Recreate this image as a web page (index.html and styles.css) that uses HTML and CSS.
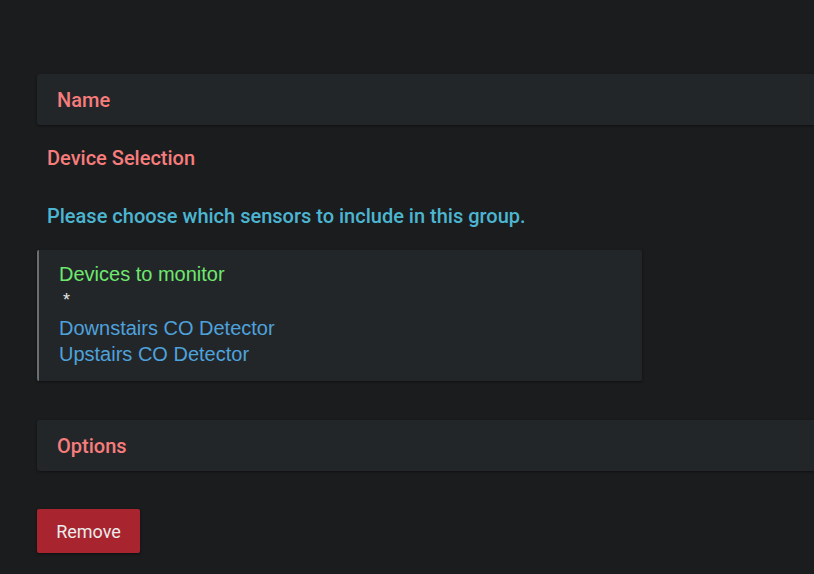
FILE: index.html
```html
<!DOCTYPE html>
<html>
<head>
<meta charset="utf-8">
<link rel="stylesheet" href="styles.css">
</head>
<body>
<div class="page">
  <div class="bar"><span class="bar-title">Name</span></div>
  <div class="section-title">Device Selection</div>
  <div class="desc">Please choose which sensors to include in this group.</div>
  <div class="devbox">
    <div class="dev-label">Devices to monitor</div>
    <div class="asterisk">*</div>
    <div class="dev-item">Downstairs CO Detector</div>
    <div class="dev-item">Upstairs CO Detector</div>
  </div>
  <div class="bar bar-options"><span class="bar-title">Options</span></div>
  <button class="remove">Remove</button>
</div>
</body>
</html>
```
FILE: styles.css
```css
html, body {
  margin: 0;
  padding: 0;
  background: #1b1c1e;
  height: 100%;
}
body {
  font-family: Roboto, "Liberation Sans", sans-serif;
  overflow: hidden;
}
.page {
  padding: 74px 0 0 37px;
  display: flex;
  flex-direction: column;
  align-items: flex-start;
}
.bar {
  align-self: stretch;
  height: 51px;
  background: #232629;
  border-radius: 3px 0 0 3px;
  box-shadow: 0 1px 3px rgba(0,0,0,0.45);
  display: flex;
  align-items: center;
  padding-left: 20px;
}
.bar-title {
  color: #f77c7c;
  font-size: 20px;
  font-weight: 500;
}
.section-title {
  color: #f77c7c;
  font-size: 20px;
  font-weight: 500;
  margin: 22px 0 0 10px;
  line-height: 22px;
}
.desc {
  color: #4cb6d2;
  font-size: 20px;
  font-weight: 500;
  margin: 36px 0 0 10px;
  line-height: 22px;
}
.devbox {
  margin-top: 23px;
  width: 605px;
  height: 131px;
  box-sizing: border-box;
  background: #232629;
  border-left: 2px solid #6b6d70;
  box-shadow: 0 1px 3px rgba(0,0,0,0.45);
  border-radius: 2px;
  padding: 12px 0 0 20px;
  font-family: "Liberation Sans", Arial, sans-serif;
  font-size: 20px;
}
.dev-label {
  color: #6ee86e;
  line-height: 24px;
}
.asterisk {
  color: #e6e6e6;
  font-size: 18px;
  line-height: 29px;
  padding-left: 4px;
}
.dev-item {
  color: #4ea2dc;
  line-height: 26px;
}
.bar-options {
  margin-top: 39px;
}
.remove {
  margin-top: 38px;
  width: 103px;
  height: 44px;
  background: #a8242f;
  color: #ececec;
  border: none;
  border-radius: 2px;
  box-shadow: 0 1px 3px rgba(0,0,0,0.5);
  font-family: Roboto, "Liberation Sans", sans-serif;
  font-size: 18px;
  padding: 0;
}
```
